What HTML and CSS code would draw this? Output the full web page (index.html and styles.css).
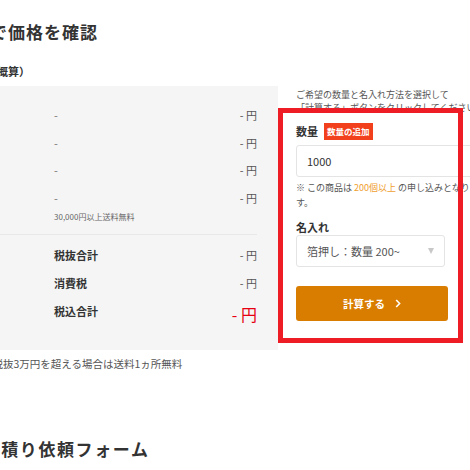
FILE: index.html
```html
<!DOCTYPE html>
<html lang="ja">
<head>
<meta charset="utf-8">
<link rel="stylesheet" href="styles.css">
</head>
<body>
<div class="page">
  <h2 class="title t1">数量で価格を確認</h2>
  <p class="sub">金額（概算）</p>
  <div class="main">
    <div class="left">
      <div class="panel">
        <div class="row"><span></span><span class="item">-</span><span class="val">- 円</span></div>
        <div class="row"><span></span><span class="item">-</span><span class="val">- 円</span></div>
        <div class="row"><span></span><span class="item">-</span><span class="val">- 円</span></div>
        <div class="row"><span></span><span class="item">-</span><span class="val">- 円</span></div>
        <div class="free">30,000円以上送料無料</div>
        <div class="sep"></div>
        <div class="row total first"><span></span><span class="lbl">税抜合計</span><span class="val">- 円</span></div>
        <div class="row total"><span></span><span class="lbl">消費税</span><span class="val">- 円</span></div>
        <div class="row total"><span></span><span class="lbl">税込合計</span><span class="val big">- 円</span></div>
      </div>
      <p class="ship">送料は税抜3万円を超える場合は送料1ヵ所無料</p>
    </div>
    <div class="right">
      <p class="desc">ご希望の数量と名入れ方法を選択して<br>「計算する」ボタンをクリックしてください</p>
      <div class="qty-row"><span class="flabel">数量</span><span class="badge">数量の追加</span></div>
      <div class="input">1000</div>
      <p class="note">※ この商品は <span class="hl">200個以上</span> の申し込みとなります。</p>
      <div class="flabel name">名入れ</div>
      <div class="select"><span>箔押し：数量 200~</span><span class="arrow"></span></div>
      <div class="btn"><span>計算する</span><svg width="6" height="9" viewBox="0 0 6 9"><polyline points="1.2,1 4.6,4.5 1.2,8" fill="none" stroke="#fff" stroke-width="1.6"/></svg></div>
    </div>
    <div class="frame"></div>
  </div>
  <h2 class="title t2">お見積り依頼フォーム</h2>
</div>
</body>
</html>
```

FILE: styles.css
```css
html, body {
  margin: 0;
  padding: 0;
  overflow: hidden;
  background: #fff;
}
body {
  font-family: "Noto Sans CJK JP", "Noto Sans", sans-serif;
  color: #555;
}
.page {
  margin-left: -36px;
  width: 640px;
}
p { margin: 0; }
.title {
  margin: 0;
  font-size: 17px;
  line-height: 24px;
  font-weight: 700;
  letter-spacing: 0.8px;
  color: #333;
  white-space: nowrap;
}
.t1 {
  margin-top: 20px;
  margin-left: -10px;
  letter-spacing: 1px;
}
.t2 {
  margin-top: 66px;
  letter-spacing: 1.6px;
}
.sub {
  margin-top: 19px;
  font-size: 11px;
  line-height: 16px;
  font-weight: 700;
  color: #333;
}
.main {
  position: relative;
  margin-top: 7px;
  display: flex;
  align-items: flex-start;
}
.left {
  width: 314px;
  flex: none;
}
.panel {
  background: #f5f5f5;
  padding: 15px 21px 25px 0;
}
.row {
  display: grid;
  grid-template-columns: 90px 1fr auto;
  align-items: center;
  height: 27.7px;
  font-size: 11px;
  color: #555;
}
.item { color: #777; }
.val { text-align: right; }
.free {
  padding-left: 90px;
  font-size: 8px;
  line-height: 10px;
  color: #666;
}
.sep {
  margin-top: 12px;
  border-top: 1px solid #e8e8e8;
}
.total {
  height: 28px;
}
.total.first { margin-top: 6px; }
.lbl {
  font-weight: 700;
  color: #333;
}
.big {
  font-size: 16px;
  color: #e60012;
  padding-top: 5px;
}
.ship {
  margin-top: 7px;
  margin-left: -3px;
  font-size: 10.5px;
  line-height: 14px;
  color: #555;
  white-space: nowrap;
}
.right {
  width: 190px;
  flex: none;
  margin-left: 18px;
  margin-top: 1.5px;
}
.desc {
  font-size: 9px;
  line-height: 13px;
  color: #555;
  white-space: nowrap;
}
.qty-row {
  display: flex;
  align-items: center;
  margin-top: 9px;
  height: 17px;
}
.flabel {
  font-size: 11px;
  font-weight: 700;
  color: #333;
}
.badge {
  margin-left: 6px;
  background: #f2401c;
  color: #fff;
  font-size: 8.5px;
  font-weight: 700;
  line-height: 17px;
  padding: 0 3px;
}
.input {
  margin-top: 5px;
  height: 32px;
  box-sizing: border-box;
  border: 1px solid #e4e4e4;
  border-radius: 3px;
  padding-left: 10px;
  font-size: 11px;
  line-height: 30px;
  color: #333;
}
.note {
  margin-top: 3.5px;
  font-size: 9px;
  line-height: 15px;
  color: #555;
}
.hl { color: #f0a030; }
.name {
  margin-top: 9.5px;
  line-height: 14px;
}
.select {
  margin-top: 1px;
  width: 149px;
  height: 32px;
  box-sizing: border-box;
  border: 1px solid #e4e4e4;
  border-radius: 3px;
  padding: 0 10px;
  display: flex;
  align-items: center;
  justify-content: space-between;
  font-size: 11px;
  color: #555;
}
.arrow {
  width: 0;
  height: 0;
  border-left: 3.5px solid transparent;
  border-right: 3.5px solid transparent;
  border-top: 6px solid #c8c8c8;
}
.btn {
  margin-top: 19px;
  width: 152px;
  height: 35px;
  background: #d97d00;
  border-radius: 3px;
  display: flex;
  align-items: center;
  justify-content: center;
  gap: 10px;
  color: #fff;
  font-size: 10.5px;
  font-weight: 700;
}
.frame {
  position: absolute;
  left: 314px;
  top: 22px;
  width: 185px;
  height: 235px;
  box-sizing: border-box;
  border: 5px solid #ee1c24;
}
```
